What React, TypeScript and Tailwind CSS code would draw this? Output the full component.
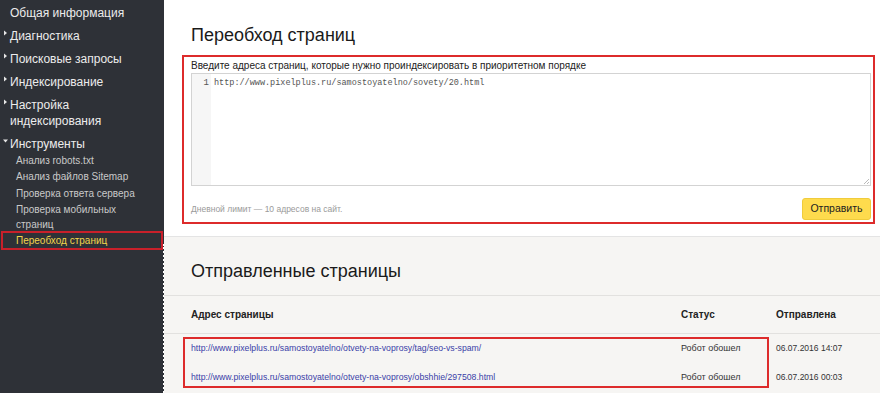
import React from "react";

const Arrow = ({ down }: { down?: boolean }) => (
  <svg width="6" height="6" viewBox="0 0 6 6" className="absolute left-[3px] top-[6px]">
    {down ? <path d="M0 1.5 L5 1.5 L2.5 4.5 Z" fill="#e6e6e6" /> : <path d="M1 0.5 L4 3 L1 5.5 Z" fill="#e6e6e6" />}
  </svg>
);

const TopItem = ({ children, arrow, down }: { children: React.ReactNode; arrow?: boolean; down?: boolean }) => (
  <div className="relative pl-[10px] pr-2 py-[3.5px] text-[12px] leading-[16px] text-[#ececec]">
    {arrow && <Arrow down={down} />}
    {children}
  </div>
);

const SubItem = ({ children, active }: { children: React.ReactNode; active?: boolean }) => (
  <div
    className={
      "pr-2 text-[10px] leading-[15px] " +
      (active
        ? "text-[#f2d54b] border-2 border-[#c8202a] mx-[1px] pl-[13px] -mt-[2px]"
        : "pl-[16px] py-[0.75px] text-[#c9c9c9]")
    }
  >
    {children}
  </div>
);

export default function App() {
  return (
    <div className="flex w-[880px] h-[393px] overflow-hidden font-['Liberation_Sans',Arial,sans-serif]">
      <aside className="relative w-[164px] shrink-0 bg-[#2e3137] pt-[1px]">
        <TopItem>Общая информация</TopItem>
        <TopItem arrow>Диагностика</TopItem>
        <TopItem arrow>Поисковые запросы</TopItem>
        <TopItem arrow>Индексирование</TopItem>
        <TopItem arrow>
          Настройка
          <br />
          индексирования
        </TopItem>
        <TopItem arrow down>
          Инструменты
        </TopItem>
        <div className="-mt-[3px]">
          <SubItem>Анализ robots.txt</SubItem>
          <SubItem>Анализ файлов Sitemap</SubItem>
          <SubItem>Проверка ответа сервера</SubItem>
          <SubItem>
            Проверка мобильных
            <br />
            страниц
          </SubItem>
          <SubItem active>Переобход страниц</SubItem>
        </div>
        <div className="absolute right-[-1px] top-[244px] bottom-0 border-r-2 border-dotted border-white" />
      </aside>

      <main className="flex-1 flex flex-col min-w-0">
        <section className="bg-white pl-[18px] pr-[5px] pt-[23px] pb-[12px] border-b border-[#e4e4e4]">
          <h1 className="pl-[9px] text-[18px] leading-[24px] text-[#1a1a1a] font-normal">Переобход страниц</h1>
          <div className="mt-[8px] border-2 border-[#dd2b2b] pl-[7px] pr-[2px] pt-[2px] pb-[2px]">
            <div className="text-[10px] leading-[13px] text-[#222]">
              Введите адреса страниц, которые нужно проиндексировать в приоритетном порядке
            </div>
            <div className="relative mt-[1px] h-[113px] flex border border-[#d3d3d3] bg-white">
              <div className="w-[19px] bg-[#f6f6f6] text-right pr-[2px] pt-[3px] font-['Liberation_Mono',monospace] text-[9px] leading-[12px] text-[#555]">
                1
              </div>
              <div className="pl-[3px] pt-[3px] font-['Liberation_Mono',monospace] text-[8.5px] leading-[12px] text-[#555]">
                http://www.pixelplus.ru/samostoyatelno/sovety/20.html
              </div>
              <svg width="6" height="6" viewBox="0 0 6 6" className="absolute right-[1px] bottom-[1px]">
                <path d="M6 1 L1 6 M6 4 L4 6" stroke="#aaa" strokeWidth="0.8" />
              </svg>
            </div>
            <div className="mt-[12px] flex items-center justify-between">
              <span className="text-[8.5px] text-[#9a9a9a]">Дневной лимит — 10 адресов на сайт.</span>
              <button className="h-[22px] w-[69px] rounded-[3px] bg-[#fedb4d] border border-[#f0cc3c] text-[10.5px] text-[#222]">
                Отправить
              </button>
            </div>
          </div>
        </section>

        <section className="relative flex-1 bg-[#f6f5f3]">
          <h2 className="pl-[27px] pt-[22px] text-[18px] leading-[24px] text-[#1a1a1a] font-normal">
            Отправленные страницы
          </h2>
          <div className="mt-[12px] border-t border-[#e2e1df]">
            <div className="grid grid-cols-[490px_95px_1fr] pl-[27px] h-[38px] items-center border-b border-[#e2e1df] text-[10px] font-bold text-[#222]">
              <span>Адрес страницы</span>
              <span>Статус</span>
              <span>Отправлена</span>
            </div>
            <div>
              {[
                ["http://www.pixelplus.ru/samostoyatelno/otvety-na-voprosy/tag/seo-vs-spam/", "06.07.2016 14:07"],
                ["http://www.pixelplus.ru/samostoyatelno/otvety-na-voprosy/obshhie/297508.html", "06.07.2016 00:03"],
              ].map(([url, date]) => (
                <div key={url} className="grid grid-cols-[490px_95px_1fr] pl-[27px] h-[29px] items-center text-[9px] text-[#333]">
                  <span className="text-[8.7px] text-[#3a3fa8]">{url}</span>
                  <span>Робот обошел</span>
                  <span className="text-[8.5px]">{date}</span>
                </div>
              ))}
            </div>
          </div>
          <div className="absolute left-[19px] top-[100px] w-[586px] h-[51px] border-2 border-[#dd2b2b]" />
        </section>
      </main>
    </div>
  );
}
